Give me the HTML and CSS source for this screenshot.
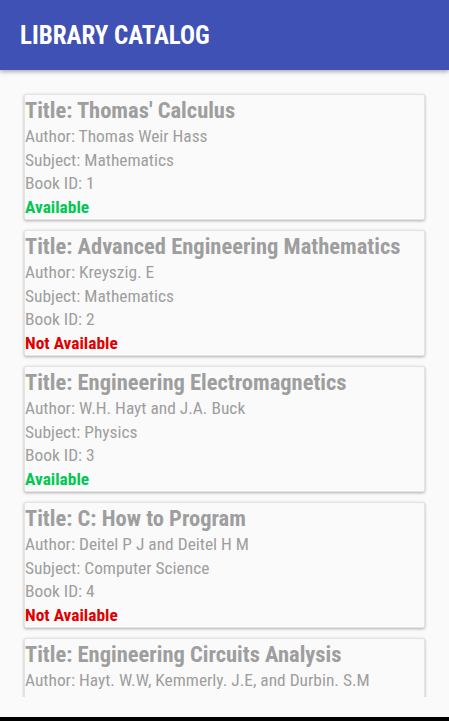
FILE: index.html
```html
<!DOCTYPE html>
<html>
<head>
<meta charset="utf-8">
<link rel="stylesheet" href="styles.css">
</head>
<body>
<div class="screen">
  <header class="appbar"><h1 class="appbar-title">LIBRARY CATALOG</h1></header>
  <main class="list">
    <div class="card">
      <div class="title">Title: Thomas' Calculus</div>
      <div class="line">Author: Thomas Weir Hass</div>
      <div class="line">Subject: Mathematics</div>
      <div class="line">Book ID: 1</div>
      <div class="status ok">Available</div>
    </div>
    <div class="card">
      <div class="title">Title: Advanced Engineering Mathematics</div>
      <div class="line">Author: Kreyszig. E</div>
      <div class="line">Subject: Mathematics</div>
      <div class="line">Book ID: 2</div>
      <div class="status no">Not Available</div>
    </div>
    <div class="card">
      <div class="title">Title: Engineering Electromagnetics</div>
      <div class="line">Author: W.H. Hayt and J.A. Buck</div>
      <div class="line">Subject: Physics</div>
      <div class="line">Book ID: 3</div>
      <div class="status ok">Available</div>
    </div>
    <div class="card">
      <div class="title">Title: C: How to Program</div>
      <div class="line">Author: Deitel P J and Deitel H M</div>
      <div class="line">Subject: Computer Science</div>
      <div class="line">Book ID: 4</div>
      <div class="status no">Not Available</div>
    </div>
    <div class="card">
      <div class="title">Title: Engineering Circuits Analysis</div>
      <div class="line">Author: Hayt. W.W, Kemmerly. J.E, and Durbin. S.M</div>
      <div class="line">Subject: Electronics</div>
      <div class="line">Book ID: 5</div>
      <div class="status ok">Available</div>
    </div>
  </main>
  <div class="navbar"></div>
</div>
</body>
</html>
```
FILE: styles.css
```css
html, body { margin: 0; padding: 0; }
body { background: #fafafa; font-family: "Roboto Condensed", Roboto, "Liberation Sans", sans-serif; font-stretch: condensed; }
.screen { width: 449px; height: 721px; display: flex; flex-direction: column; overflow: hidden; }
.appbar { height: 70px; flex: none; background: #3f51b5; display: flex; align-items: center; padding-left: 20px; box-shadow: 0 2px 4px rgba(0,0,0,0.3); position: relative; z-index: 1; }
.appbar-title { margin: 0; color: #fff; font-size: 25px; font-weight: 700; letter-spacing: 0; }
.list { box-sizing: border-box; height: 627px; flex: none; overflow: hidden; padding: 24px 24px 0 24px; display: flex; flex-direction: column; gap: 10px; }
.card { flex: none; background: #fafafa; border: 1px solid #e4e4e4; border-radius: 2px; box-shadow: 0 1px 3px rgba(0,0,0,0.3); width: 399px; }
.title { font-size: 22.5px; font-weight: 700; color: #9e9e9e; line-height: 30px; }
.line { font-size: 17.4px; color: #9e9e9e; line-height: 23.5px; }
.status { font-size: 17.4px; font-weight: 700; line-height: 23.5px; }
.ok { color: #00c853; }
.no { color: #e00000; }
.navbar { height: 24px; flex: none; background: #fafafa; border-bottom: 4px solid #000; box-sizing: border-box; }
```
